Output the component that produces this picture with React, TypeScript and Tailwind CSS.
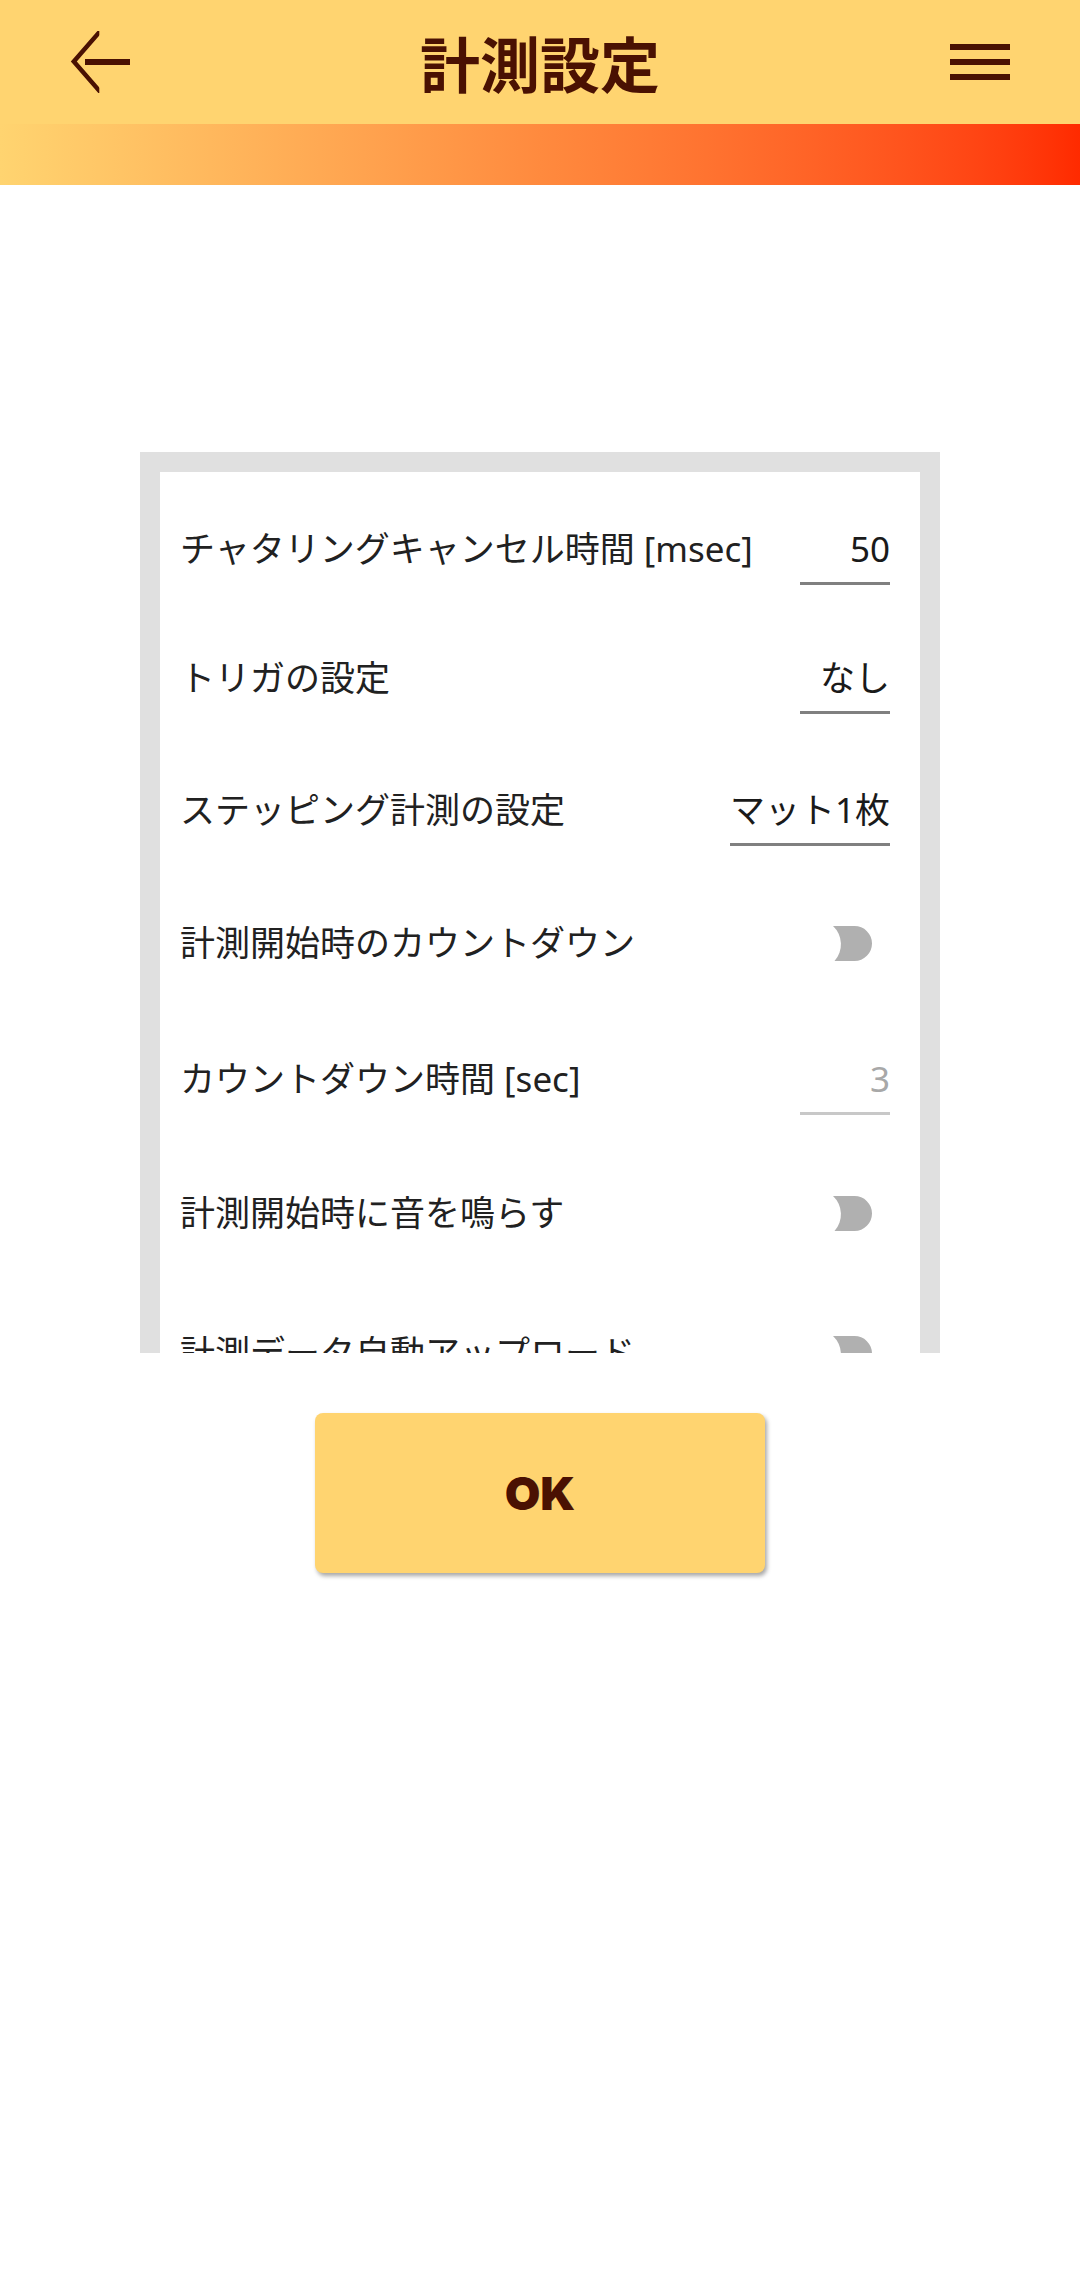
import React from "react";

const labelFont = { fontFamily: '"Noto Sans", "Noto Sans CJK JP", sans-serif' };

type Row =
    | { kind: "input"; label: string; value: string; height: string; disabled?: boolean }
    | { kind: "toggle"; label: string; height: string };

const rows: Row[] = [
    { kind: "input", label: "チャタリングキャンセル時間 [msec]", value: "50", height: "h-[130px]" },
    { kind: "input", label: "トリガの設定", value: "なし", height: "h-[128px]" },
    { kind: "input", label: "ステッピング計測の設定", value: "マット1枚", height: "h-[136px]" },
    { kind: "toggle", label: "計測開始時のカウントダウン", height: "h-[130px]" },
    { kind: "input", label: "カウントダウン時間 [sec]", value: "3", height: "h-[142px]", disabled: true },
    { kind: "toggle", label: "計測開始時に音を鳴らす", height: "h-[126px]" },
    { kind: "toggle", label: "計測データ自動アップロード", height: "h-[154px]" },
];

function BackArrow() {
    return (
        <svg width="62" height="62" viewBox="0 0 62 62" className="block">
            <defs>
                <clipPath id="chev">
                    <rect x="0" y="0" width="29.3" height="62" />
                </clipPath>
            </defs>
            <path
                d="M33 -3 L3.8 30.5 L33 64"
                fill="none"
                stroke="#4A1102"
                strokeWidth="4.5"
                strokeLinejoin="miter"
                clipPath="url(#chev)"
            />
            <rect x="15" y="28" width="45" height="6" fill="#4A1102" />
        </svg>
    );
}

function Hamburger() {
    return (
        <svg width="60" height="36" viewBox="0 0 60 36" className="block">
            <rect x="0" y="0" width="60" height="6" fill="#4A1102" />
            <rect x="0" y="15" width="60" height="6" fill="#4A1102" />
            <rect x="0" y="30" width="60" height="6" fill="#4A1102" />
        </svg>
    );
}

function SwitchOff() {
    // thumb of the switch, clipped on its left side
    return (
        <svg width="39" height="35" viewBox="0 0 39 35" className="block mr-[18px]">
            <path d="M0 0 H21.5 A17.5 17.5 0 0 1 21.5 35 H1.5 A25 25 0 0 0 0 0 Z" fill="#B0B0B0" />
        </svg>
    );
}

export default function App() {
    return (
        <div className="w-[1080px] min-h-[2288px] bg-white" style={labelFont}>
            {/* Top bar */}
            <header>
                <div className="grid grid-cols-[1fr_auto_1fr] items-center h-[124px] bg-[#FFD470]">
                    <div className="pl-[70px]">
                        <BackArrow />
                    </div>
                    <h1
                        className="text-[60px] leading-none font-bold text-[#4A1102]"
                        style={{ fontFamily: '"Noto Sans CJK JP", sans-serif' }}
                    >
                        計測設定
                    </h1>
                    <div className="flex justify-end pr-[70px]">
                        <Hamburger />
                    </div>
                </div>
                <div className="h-[61px] bg-linear-to-r from-[#FFD470] via-[#FF8A3E] to-[#FF2A00]" />
            </header>

            {/* Settings panel */}
            <div className="flex flex-col items-center pt-[267px]">
                <div className="w-[800px] h-[901px] bg-[#E0E0E0] px-[20px] pt-[20px]">
                    <div className="h-full bg-white overflow-hidden pt-[12px]">
                        {rows.map((row) => (
                            <div
                                key={row.label}
                                className={`flex items-center justify-between pl-[20px] pr-[30px] ${row.height}`}
                            >
                                <span className="text-[35px] leading-[42px] text-[#212121] whitespace-nowrap">
                                    {row.label}
                                </span>
                                {row.kind === "input" ? (
                                    <span
                                        className={
                                            row.disabled
                                                ? "min-w-[90px] text-right text-[35px] leading-[42px] pt-[15px] pb-[12px] border-b-[3px] border-[#C8C8C8] text-[#A8A8A8]"
                                                : "min-w-[90px] text-right text-[35px] leading-[42px] pt-[15px] pb-[12px] border-b-[3px] border-[#808080] text-[#1A1A1A]"
                                        }
                                    >
                                        {row.value}
                                    </span>
                                ) : (
                                    <SwitchOff />
                                )}
                            </div>
                        ))}
                    </div>
                </div>

                <button
                    className="mt-[60px] w-[450px] h-[160px] rounded-[8px] bg-[#FFD470] shadow-[2px_3px_4px_rgba(0,0,0,0.35)] text-[46px] font-black text-[#4A1102]"
                    style={{ fontFamily: "Inter, sans-serif" }}
                >
                    OK
                </button>
            </div>
        </div>
    );
}
